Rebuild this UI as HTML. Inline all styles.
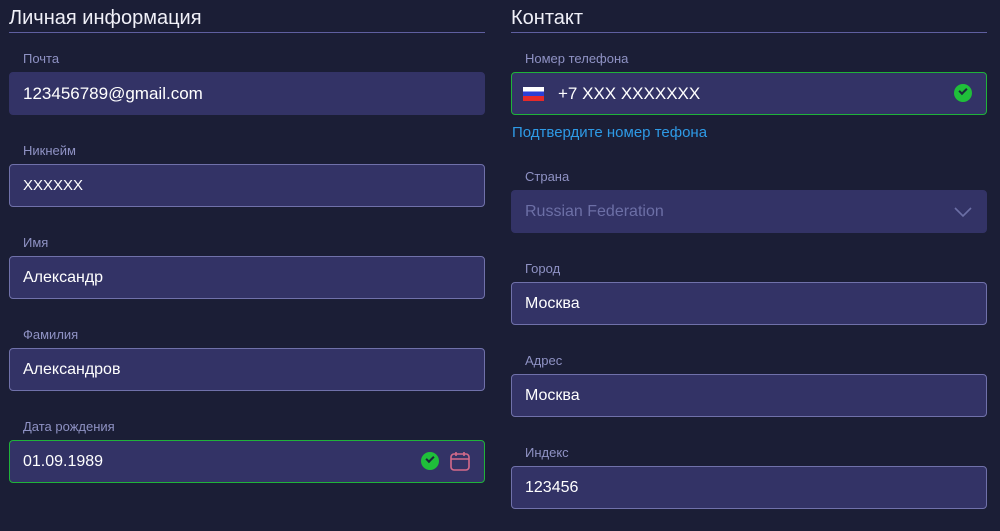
<!DOCTYPE html>
<html><head><meta charset="utf-8"><style>
*{box-sizing:border-box;margin:0;padding:0}
body{width:1000px;height:531px;background:#1b1e36;font-family:"Liberation Sans","DejaVu Sans",sans-serif;position:relative;overflow:hidden;color:#fff}
.h{position:absolute;top:7px;font-size:20px;color:#f0f0f8;height:26px;border-bottom:1px solid #5f5fa0;width:476px}
.l{position:absolute;font-size:13px;color:#8f92c4}
.i{position:absolute;width:476px;height:43px;background:#333366;border:1px solid #7071aa;border-radius:4px;font-size:17px;color:#fff;padding-left:13px;line-height:41px}
.nb{border-color:#333366}
.g{border-color:#1fb33a}
.ck{position:absolute;width:18px;height:18px;border-radius:50%;background:#1fbf3a;top:11px}
.ck:after{content:"";position:absolute;left:5px;top:4px;width:6px;height:3px;border-left:2px solid #1b2a3a;border-bottom:2px solid #1b2a3a;transform:rotate(-45deg)}
</style></head><body>
<div class="h" style="left:9px">Личная информация</div>
<div class="h" style="left:511px">Контакт</div>

<div class="l" style="left:23px;top:51px">Почта</div>
<div class="i nb" style="left:9px;top:72px">123456789@gmail.com</div>
<div class="l" style="left:23px;top:143px">Никнейм</div>
<div class="i" style="left:9px;top:164px;font-size:15px">XXXXXX</div>
<div class="l" style="left:23px;top:235px">Имя</div>
<div class="i" style="left:9px;top:256px;font-size:16px">Александр</div>
<div class="l" style="left:23px;top:327px">Фамилия</div>
<div class="i" style="left:9px;top:348px;font-size:16px">Александров</div>
<div class="l" style="left:23px;top:419px">Дата рождения</div>
<div class="i g" style="left:9px;top:440px;font-size:16px">01.09.1989
<div class="ck" style="left:411px"></div>
<svg style="position:absolute;left:439px;top:9px" width="22" height="22" viewBox="0 0 22 22" fill="none" stroke="#d46a8a" stroke-width="1.6"><rect x="2" y="4" width="18" height="16" rx="3"/><path d="M2 9h18M7 2v4M15 2v4"/></svg>
</div>

<div class="l" style="left:525px;top:51px">Номер телефона</div>
<div class="i g" style="left:511px;top:72px;padding-left:46px">+7 XXX XXXXXXX
<div style="position:absolute;left:11px;top:14px;width:21px;height:14px;background:linear-gradient(#fff 0 33%,#2b3fd6 33% 66%,#e62a2a 66%)"></div>
<div class="ck" style="left:442px"></div>
</div>
<div style="position:absolute;left:512px;top:124px;font-size:15px;color:#2e9ae6">Подтвердите номер тефона</div>
<div class="l" style="left:525px;top:169px">Страна</div>
<div class="i nb" style="left:511px;top:190px;color:#6c6fa6;font-size:16px">Russian Federation
<svg style="position:absolute;left:441px;top:15px" width="20" height="12" viewBox="0 0 20 12" fill="none" stroke="#6c6fa6" stroke-width="1.6"><path d="M2 2l8 8 8-8"/></svg>
</div>
<div class="l" style="left:525px;top:261px">Город</div>
<div class="i" style="left:511px;top:282px;font-size:16px">Москва</div>
<div class="l" style="left:525px;top:353px">Адрес</div>
<div class="i" style="left:511px;top:374px;font-size:16px">Москва</div>
<div class="l" style="left:525px;top:445px">Индекс</div>
<div class="i" style="left:511px;top:466px;font-size:16px">123456</div>
</body></html>
